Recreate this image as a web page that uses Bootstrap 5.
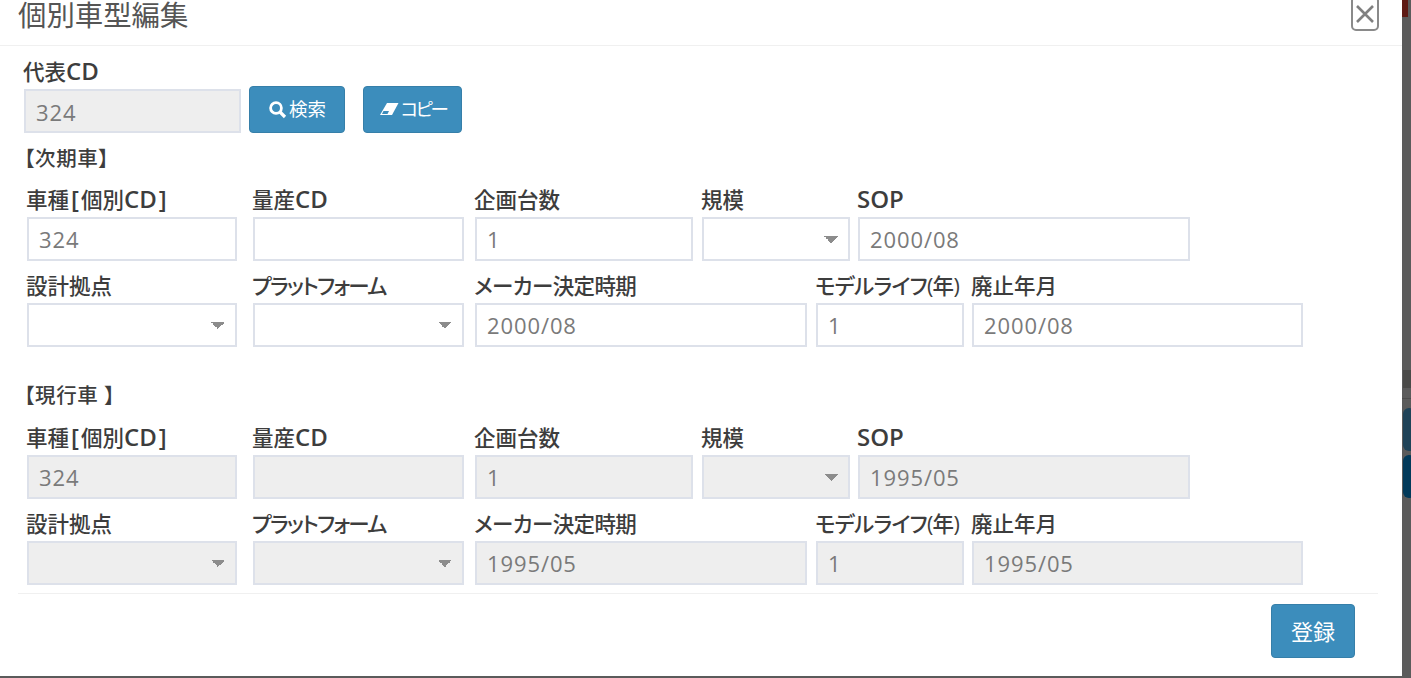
<!DOCTYPE html>
<html lang="ja">
<head>
<meta charset="utf-8">
<title>個別車型編集</title>
<link href="https://cdn.jsdelivr.net/npm/bootstrap@5.3.0/dist/css/bootstrap.min.css" rel="stylesheet">
<style>
html,body{height:100%;margin:0;overflow:hidden;background:#5b5b5b;font-family:"Open Sans","Noto Sans CJK JP",sans-serif;}
.stage{position:relative;width:1411px;height:678px;overflow:hidden;background:#5b5b5b;}
.under-red{position:absolute;left:1402px;top:0;width:6px;height:17px;background:#5e1a14;}
.under-txt{position:absolute;left:1403px;top:370px;width:8px;height:18px;background:#4a4a48;}
.under-line{position:absolute;left:1402px;top:398px;width:9px;height:1px;background:#4c4c4c;}
.under-a{position:absolute;left:1403px;top:408px;width:12px;height:43px;border-radius:6px;background:#1f4358;}
.under-b{position:absolute;left:1403px;top:455px;width:12px;height:43px;border-radius:6px;background:#023a5a;}
.sheet{width:1402px;height:676px;background:#fff;display:flex;flex-direction:column;position:relative;}
.sheet-head{height:46px;border-bottom:1px solid #f0f0f0;flex:none;position:relative;padding:0 0 0 18px;}
.sheet-title{font-size:28.4px;line-height:28px;color:#555;font-weight:400;margin:0;font-family:"Noto Sans CJK JP",sans-serif;}
.close-x{position:absolute;left:1351px;top:-4px;width:28px;height:35px;border:2px solid #8a8a8a;border-radius:5px;background:#fff;padding:0;display:flex;align-items:center;justify-content:center;}
.sheet-body{flex:none;height:547px;padding-left:27px;position:relative;}
.lbl{display:block;font-size:21.5px;line-height:24px;color:#3d3d3d;font-weight:500;margin:0 0 5px -1px;white-space:nowrap;font-feature-settings:"palt";}
.ltn{font-size:24px;font-weight:600;line-height:20px;}
.brk{margin:0 2px;}
.brk-end{margin-right:2px;}
.kana-a{letter-spacing:-1.7px;}
.kana-b{letter-spacing:-.7px;}
.kana-c{letter-spacing:-.6px;}
.fld{height:44px;border:2px solid #dde1ea;border-radius:0;background:#fff;color:#7a7a7a;font-size:22px;line-height:40px;padding:0 10px;letter-spacing:.9px;width:100%;display:block;outline:0;}
.fld:disabled,.fld.off{background:#eeeeee;color:#7a7a7a;opacity:1;}
.fld.off{padding-top:2px;}
.fld.sel{appearance:none;background-image:linear-gradient(45deg,transparent 50%,#8c8c8c 50%),linear-gradient(-45deg,transparent 50%,#8c8c8c 50%);background-size:7px 7px,7px 7px;background-repeat:no-repeat;background-position:right 17px center,right 10px center;}
.row-top{display:flex;align-items:flex-start;margin-left:-3px;height:100px;padding-top:14px;}
.cd-box{width:217px;margin-right:8px;}
.blue-btn{background:#3c8dbc;border:1px solid #367fa9;color:#fff;font-size:18.5px;line-height:1;border-radius:4px;display:inline-flex;align-items:center;justify-content:center;gap:2px;padding:0;font-feature-settings:"palt";}
.btn-find{width:96px;height:47px;margin-top:26px;margin-right:18px;}
.btn-copy{width:99px;height:47px;margin-top:26px;}
.txt-copy{letter-spacing:-2.5px;}
.sect{font-size:20.5px;line-height:24px;color:#3d3d3d;font-weight:500;margin:0 0 0 -3px;font-feature-settings:"palt";letter-spacing:.7px;}
.sect-a{height:42px;}
.sect-b{height:43px;margin-top:36px;}
.line{display:flex;align-items:flex-start;margin-bottom:13px;}
.wa{width:210px;margin-right:16px;}
.wb{width:211px;margin-right:11px;}
.wc{width:218px;margin-right:9px;}
.wd{width:148px;margin-right:8px;}
.we{width:332px;}
.wf{width:332px;margin-right:9px;}
.wg{width:331px;}
.rule{flex:none;height:1px;margin-left:18px;width:1360px;background:#f0f0f0;}
.sheet-foot{flex:1;display:flex;justify-content:flex-end;padding:10px 47px 0 0;}
.btn-save{width:84px;height:54px;font-size:22px;}
</style>
</head>
<body>
<div class="stage">
  <div class="under-red"></div>
  <div class="under-txt"></div>
  <div class="under-line"></div>
  <div class="under-a"></div>
  <div class="under-b"></div>
  <div class="sheet">
    <div class="sheet-head">
      <h5 class="sheet-title">個別車型編集</h5>
      <button class="close-x" type="button" aria-label="閉じる"><svg width="20" height="20" viewBox="0 0 20 20"><path d="M2 2 18 18M18 2 2 18" stroke="#808080" stroke-width="2.6" fill="none"/></svg></button>
    </div>
    <div class="sheet-body">
      <div class="row-top">
        <div class="cd-box"><label class="lbl">代表<span class="ltn">CD</span></label><input class="fld off" readonly value="324"></div>
        <button class="blue-btn btn-find" type="button"><svg width="19" height="19" viewBox="0 0 19 19"><circle cx="8" cy="8" r="5.4" fill="none" stroke="#fff" stroke-width="2.8"/><path d="M12 12 17 17" stroke="#fff" stroke-width="3.2"/></svg>検索</button>
        <button class="blue-btn btn-copy" type="button"><svg width="20" height="15" viewBox="0 0 20 15"><path d="M8 1H19.500L13 13H1Z" fill="#fff"/><path d="M4.500 9H10L8.500 12H3Z" fill="#3c8dbc"/></svg><span class="txt-copy">コピー</span></button>
      </div>
      <div class="sect sect-a">【次期車】</div>
      <div class="line">
        <div class="wa"><label class="lbl">車種<span class="ltn brk">[</span>個別<span class="ltn">CD<span class="brk">]</span></span></label><input class="fld" value="324"></div>
        <div class="wb"><label class="lbl">量産<span class="ltn">CD</span></label><input class="fld" value=""></div>
        <div class="wc"><label class="lbl">企画台数</label><input class="fld" value="1"></div>
        <div class="wd"><label class="lbl">規模</label><select class="fld sel"></select></div>
        <div class="we"><label class="lbl"><span class="ltn">SOP</span></label><input class="fld" value="2000/08"></div>
      </div>
      <div class="line">
        <div class="wa"><label class="lbl">設計拠点</label><select class="fld sel"></select></div>
        <div class="wb"><label class="lbl kana-a">プラットフォーム</label><select class="fld sel"></select></div>
        <div class="wf"><label class="lbl kana-c">メーカー決定時期</label><input class="fld" value="2000/08"></div>
        <div class="wd"><label class="lbl kana-b">モデルライフ(年)</label><input class="fld" value="1"></div>
        <div class="wg"><label class="lbl">廃止年月</label><input class="fld" value="2000/08"></div>
      </div>
      <div class="sect sect-b">【現行車 】</div>
      <div class="line">
        <div class="wa"><label class="lbl">車種<span class="ltn brk">[</span>個別<span class="ltn">CD<span class="brk">]</span></span></label><input class="fld" disabled value="324"></div>
        <div class="wb"><label class="lbl">量産<span class="ltn">CD</span></label><input class="fld" disabled value=""></div>
        <div class="wc"><label class="lbl">企画台数</label><input class="fld" disabled value="1"></div>
        <div class="wd"><label class="lbl">規模</label><select class="fld sel" disabled></select></div>
        <div class="we"><label class="lbl"><span class="ltn">SOP</span></label><input class="fld" disabled value="1995/05"></div>
      </div>
      <div class="line mb-0">
        <div class="wa"><label class="lbl">設計拠点</label><select class="fld sel" disabled></select></div>
        <div class="wb"><label class="lbl kana-a">プラットフォーム</label><select class="fld sel" disabled></select></div>
        <div class="wf"><label class="lbl kana-c">メーカー決定時期</label><input class="fld" disabled value="1995/05"></div>
        <div class="wd"><label class="lbl kana-b">モデルライフ(年)</label><input class="fld" disabled value="1"></div>
        <div class="wg"><label class="lbl">廃止年月</label><input class="fld" disabled value="1995/05"></div>
      </div>
    </div>
    <div class="rule"></div>
    <div class="sheet-foot"><button class="blue-btn btn-save" type="button">登録</button></div>
  </div>
</div>
<script src="https://cdn.jsdelivr.net/npm/bootstrap@5.3.0/dist/js/bootstrap.bundle.min.js"></script>
</body>
</html>
